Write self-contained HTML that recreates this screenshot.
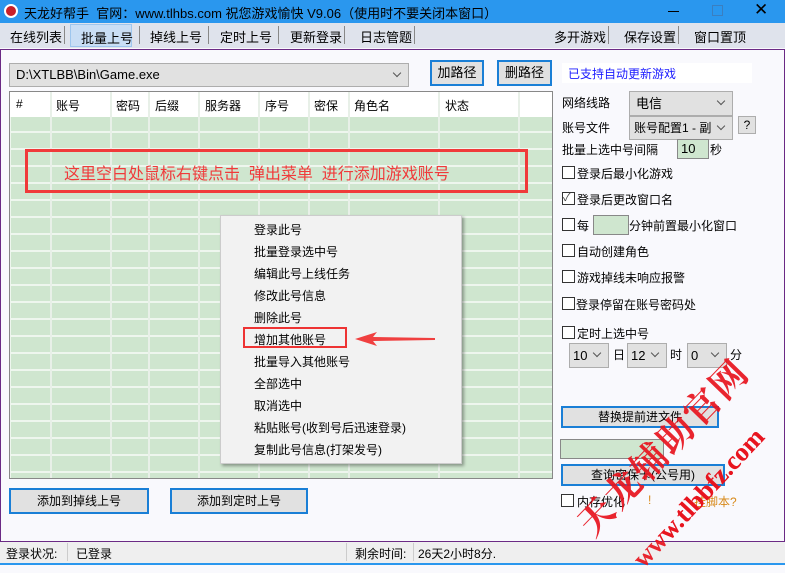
<!DOCTYPE html>
<html><head><meta charset="utf-8"><style>
*{margin:0;padding:0;box-sizing:border-box}
body{width:785px;height:565px;position:relative;overflow:hidden;background:#f9f9fd;font-family:"Liberation Sans","Noto Sans CJK SC",sans-serif;font-size:12px;color:#000}
.a{position:absolute;white-space:nowrap}
.btn{position:absolute;border:2px solid #1a7fd6;background:#e1e1e1;text-align:center;font-size:12px}
.cb{position:absolute;width:13px;height:13px;border:1px solid #333;background:#fff}
.sel{position:absolute;border:1px solid #adadad;background:#e1e1e1;padding-left:6px}
.sel:after{content:"";position:absolute;right:8px;top:6px;width:5px;height:5px;border-right:1px solid #555;border-bottom:1px solid #555;transform:rotate(45deg)}
.mi{position:absolute;left:254px;font-size:12px}
</style></head><body>
<div class="a" style="left:0;top:0;width:785px;height:23px;background:#2a97ee"></div>
<div class="a" style="left:4px;top:4px;width:14px;height:14px;border-radius:50%;background:#c8202a;border:2px solid #fff"></div>
<div class="a" style="left:24px;top:3px;font-size:13px;color:#000">天龙好帮手&nbsp; 官网：www.tlhbs.com 祝您游戏愉快 V9.06（使用时不要关闭本窗口）</div>
<div class="a" style="left:668px;top:11px;width:11px;height:1px;background:#000"></div>
<div class="a" style="left:712px;top:5px;width:11px;height:11px;border:1px solid #3a7fc0"></div>
<div class="a" style="left:754px;top:0px;font-size:17px">✕</div>
<div class="a" style="left:0;top:23px;width:785px;height:25px;background:#dfe3ec"></div>
<div class="a" style="left:70px;top:24px;width:62px;height:23px;background:#c9def5;border:1px solid #9ec6ee"></div>
<div class="a" style="left:10px;top:27px;font-size:13px">在线列表</div>
<div class="a" style="left:81px;top:28px;font-size:13px">批量上号</div>
<div class="a" style="left:150px;top:27px;font-size:13px">掉线上号</div>
<div class="a" style="left:220px;top:27px;font-size:13px">定时上号</div>
<div class="a" style="left:290px;top:27px;font-size:13px">更新登录</div>
<div class="a" style="left:360px;top:27px;font-size:13px">日志管题</div>
<div class="a" style="left:554px;top:27px;font-size:13px">多开游戏</div>
<div class="a" style="left:624px;top:27px;font-size:13px">保存设置</div>
<div class="a" style="left:694px;top:27px;font-size:13px">窗口置顶</div>
<div class="a" style="left:64px;top:26px;width:1px;height:18px;background:#888"></div>
<div class="a" style="left:139px;top:26px;width:1px;height:18px;background:#888"></div>
<div class="a" style="left:208px;top:26px;width:1px;height:18px;background:#888"></div>
<div class="a" style="left:278px;top:26px;width:1px;height:18px;background:#888"></div>
<div class="a" style="left:344px;top:26px;width:1px;height:18px;background:#888"></div>
<div class="a" style="left:414px;top:26px;width:1px;height:18px;background:#888"></div>
<div class="a" style="left:608px;top:26px;width:1px;height:18px;background:#888"></div>
<div class="a" style="left:678px;top:26px;width:1px;height:18px;background:#888"></div>
<div class="a" style="left:0;top:49px;width:785px;height:493px;border:1px solid #6b2a85"></div>
<div class="sel" style="left:9px;top:63px;width:400px;height:24px;line-height:22px;font-size:13px">D:\XTLBB\Bin\Game.exe</div>
<div class="btn" style="left:430px;top:60px;width:54px;height:26px;line-height:22px;font-size:13px">加路径</div>
<div class="btn" style="left:497px;top:60px;width:55px;height:26px;line-height:22px;font-size:13px">删路径</div>
<div class="a" style="left:562px;top:63px;width:190px;height:20px;background:#fff"></div>
<div class="a" style="left:568px;top:65px;color:#1a1aff">已支持自动更新游戏</div>
<div class="a" style="left:9px;top:91px;width:544px;height:388px;border:1px solid #888;background-color:#cfe6cf;background-image:linear-gradient(#eef6ee 2px,transparent 2px),linear-gradient(90deg,#eef6ee 1px,transparent 1px);background-size:100% 17px,100% 100%;background-position:0 22px,0 0"></div>
<div class="a" style="left:10px;top:92px;width:542px;height:25px;background:#fff"></div>
<div class="a" style="left:50px;top:92px;width:2px;height:386px;background:#e8f0e8"></div>
<div class="a" style="left:110px;top:92px;width:2px;height:386px;background:#e8f0e8"></div>
<div class="a" style="left:148px;top:92px;width:2px;height:386px;background:#e8f0e8"></div>
<div class="a" style="left:198px;top:92px;width:2px;height:386px;background:#e8f0e8"></div>
<div class="a" style="left:258px;top:92px;width:2px;height:386px;background:#e8f0e8"></div>
<div class="a" style="left:308px;top:92px;width:2px;height:386px;background:#e8f0e8"></div>
<div class="a" style="left:348px;top:92px;width:2px;height:386px;background:#e8f0e8"></div>
<div class="a" style="left:438px;top:92px;width:2px;height:386px;background:#e8f0e8"></div>
<div class="a" style="left:518px;top:92px;width:2px;height:386px;background:#e8f0e8"></div>
<div class="a" style="left:16px;top:97px">#</div>
<div class="a" style="left:56px;top:97px">账号</div>
<div class="a" style="left:116px;top:97px">密码</div>
<div class="a" style="left:155px;top:97px">后缀</div>
<div class="a" style="left:205px;top:97px">服务器</div>
<div class="a" style="left:265px;top:97px">序号</div>
<div class="a" style="left:314px;top:97px">密保</div>
<div class="a" style="left:354px;top:97px">角色名</div>
<div class="a" style="left:445px;top:97px">状态</div>
<div class="a" style="left:25px;top:149px;width:503px;height:44px;border:3px solid #f03a3a"></div>
<div class="a" style="left:64px;top:160px;font-size:16px;color:#f03a3a">这里空白处鼠标右键点击&nbsp; 弹出菜单&nbsp; 进行添加游戏账号</div>
<div class="a" style="left:220px;top:215px;width:242px;height:249px;background:#f2f2f2;border:1px solid #ccc;box-shadow:2px 2px 3px rgba(0,0,0,.35)"></div>
<div class="mi" style="top:221px">登录此号</div>
<div class="mi" style="top:243px">批量登录选中号</div>
<div class="mi" style="top:265px">编辑此号上线任务</div>
<div class="mi" style="top:287px">修改此号信息</div>
<div class="mi" style="top:309px">删除此号</div>
<div class="mi" style="top:331px">增加其他账号</div>
<div class="mi" style="top:353px">批量导入其他账号</div>
<div class="mi" style="top:375px">全部选中</div>
<div class="mi" style="top:397px">取消选中</div>
<div class="mi" style="top:419px">粘贴账号(收到号后迅速登录)</div>
<div class="mi" style="top:441px">复制此号信息(打架发号)</div>
<div class="a" style="left:243px;top:327px;width:104px;height:21px;border:2px solid #ee3333"></div>
<svg class="a" style="left:355px;top:332px" width="82" height="14"><polygon points="0,7 22,0 18,5 80,6 80,8 18,9 22,14" fill="#f04040"/></svg>
<div class="btn" style="left:9px;top:488px;width:140px;height:26px;line-height:22px">添加到掉线上号</div>
<div class="btn" style="left:170px;top:488px;width:138px;height:26px;line-height:22px">添加到定时上号</div>
<div class="a" style="left:562px;top:94px">网络线路</div>
<div class="sel" style="left:629px;top:91px;width:104px;height:25px;line-height:24px;font-size:13px">电信</div>
<div class="a" style="left:562px;top:119px">账号文件</div>
<div class="sel" style="left:629px;top:116px;width:104px;height:24px;line-height:22px;padding-left:4px">账号配置1 - 副</div>
<div class="a" style="left:738px;top:116px;width:18px;height:18px;border:1px solid #adadad;background:#e1e1e1;text-align:center;line-height:16px">?</div>
<div class="a" style="left:562px;top:141px">批量上选中号间隔</div>
<div class="a" style="left:677px;top:139px;width:32px;height:20px;background:#cfe6cf;border:1px solid #888;padding-left:3px;line-height:18px;font-size:13px">10</div>
<div class="a" style="left:710px;top:141px">秒</div>
<div class="cb" style="left:562px;top:166px"></div><div class="a" style="left:577px;top:165px">登录后最小化游戏</div>
<div class="cb" style="left:562px;top:192px"></div><div class="a" style="left:563px;top:189px;font-size:11px;color:#444">✓</div><div class="a" style="left:577px;top:191px">登录后更改窗口名</div>
<div class="cb" style="left:562px;top:218px"></div><div class="a" style="left:577px;top:217px">每</div>
<div class="a" style="left:593px;top:215px;width:36px;height:20px;background:#cfe6cf;border:1px solid #888"></div>
<div class="a" style="left:629px;top:217px">分钟前置最小化窗口</div>
<div class="cb" style="left:562px;top:244px"></div><div class="a" style="left:577px;top:243px">自动创建角色</div>
<div class="cb" style="left:562px;top:270px"></div><div class="a" style="left:577px;top:269px">游戏掉线未响应报警</div>
<div class="cb" style="left:562px;top:297px"></div><div class="a" style="left:576px;top:296px">登录停留在账号密码处</div>
<div class="cb" style="left:562px;top:326px"></div><div class="a" style="left:577px;top:325px">定时上选中号</div>
<div class="sel" style="left:569px;top:343px;width:40px;height:25px;line-height:24px;font-size:13px;padding-left:3px">10</div>
<div class="a" style="left:613px;top:346px">日</div>
<div class="sel" style="left:627px;top:343px;width:40px;height:25px;line-height:24px;font-size:13px;padding-left:3px">12</div>
<div class="a" style="left:670px;top:346px">时</div>
<div class="sel" style="left:687px;top:343px;width:40px;height:25px;line-height:24px;font-size:13px;padding-left:3px">0</div>
<div class="a" style="left:730px;top:346px">分</div>
<div class="btn" style="left:561px;top:406px;width:158px;height:22px;line-height:18px">替换提前进文件</div>
<div class="a" style="left:560px;top:439px;width:104px;height:20px;background:#cfe6cf;border:1px solid #888"></div>
<div class="btn" style="left:561px;top:464px;width:164px;height:22px;line-height:18px">查询密保卡(公号用)</div>
<div class="cb" style="left:561px;top:494px"></div><div class="a" style="left:577px;top:493px">内存优化</div>
<div class="a" style="left:648px;top:493px;color:#d88a1a">!</div>
<div class="a" style="left:694px;top:493px;color:#d88a1a">挂脚本?</div>
<div class="a" style="left:598px;top:505px;font-size:36px;line-height:38px;letter-spacing:2px;color:#e8141e;font-family:'Liberation Serif','Noto Serif CJK SC',serif;font-weight:bold;transform:rotate(-46deg);transform-origin:0 100%;opacity:.92">天龙辅助官网</div>
<div class="a" style="left:648px;top:545px;font-size:26px;line-height:28px;color:#e8141e;font-weight:bold;font-family:'Liberation Serif',serif;transform:rotate(-47deg);transform-origin:0 100%;opacity:.92">www.tlbbfz.com</div>
<div class="a" style="left:0;top:542px;width:785px;height:21px;background:#efefef"></div>
<div class="a" style="left:0;top:563px;width:785px;height:2px;background:#2a97ee"></div>
<div class="a" style="left:6px;top:545px">登录状况:</div>
<div class="a" style="left:67px;top:543px;width:1px;height:18px;background:#ccc"></div>
<div class="a" style="left:76px;top:545px">已登录</div>
<div class="a" style="left:346px;top:543px;width:1px;height:18px;background:#ccc"></div>
<div class="a" style="left:355px;top:545px">剩余时间:</div>
<div class="a" style="left:413px;top:543px;width:1px;height:18px;background:#ccc"></div>
<div class="a" style="left:418px;top:545px">26天2小时8分.</div>
<div class="a" style="left:648px;top:545px;font-size:26px;line-height:28px;color:#e8141e;font-weight:bold;font-family:'Liberation Serif',serif;transform:rotate(-47deg);transform-origin:0 100%;opacity:.92">www.tlbbfz.com</div>
</body></html>
